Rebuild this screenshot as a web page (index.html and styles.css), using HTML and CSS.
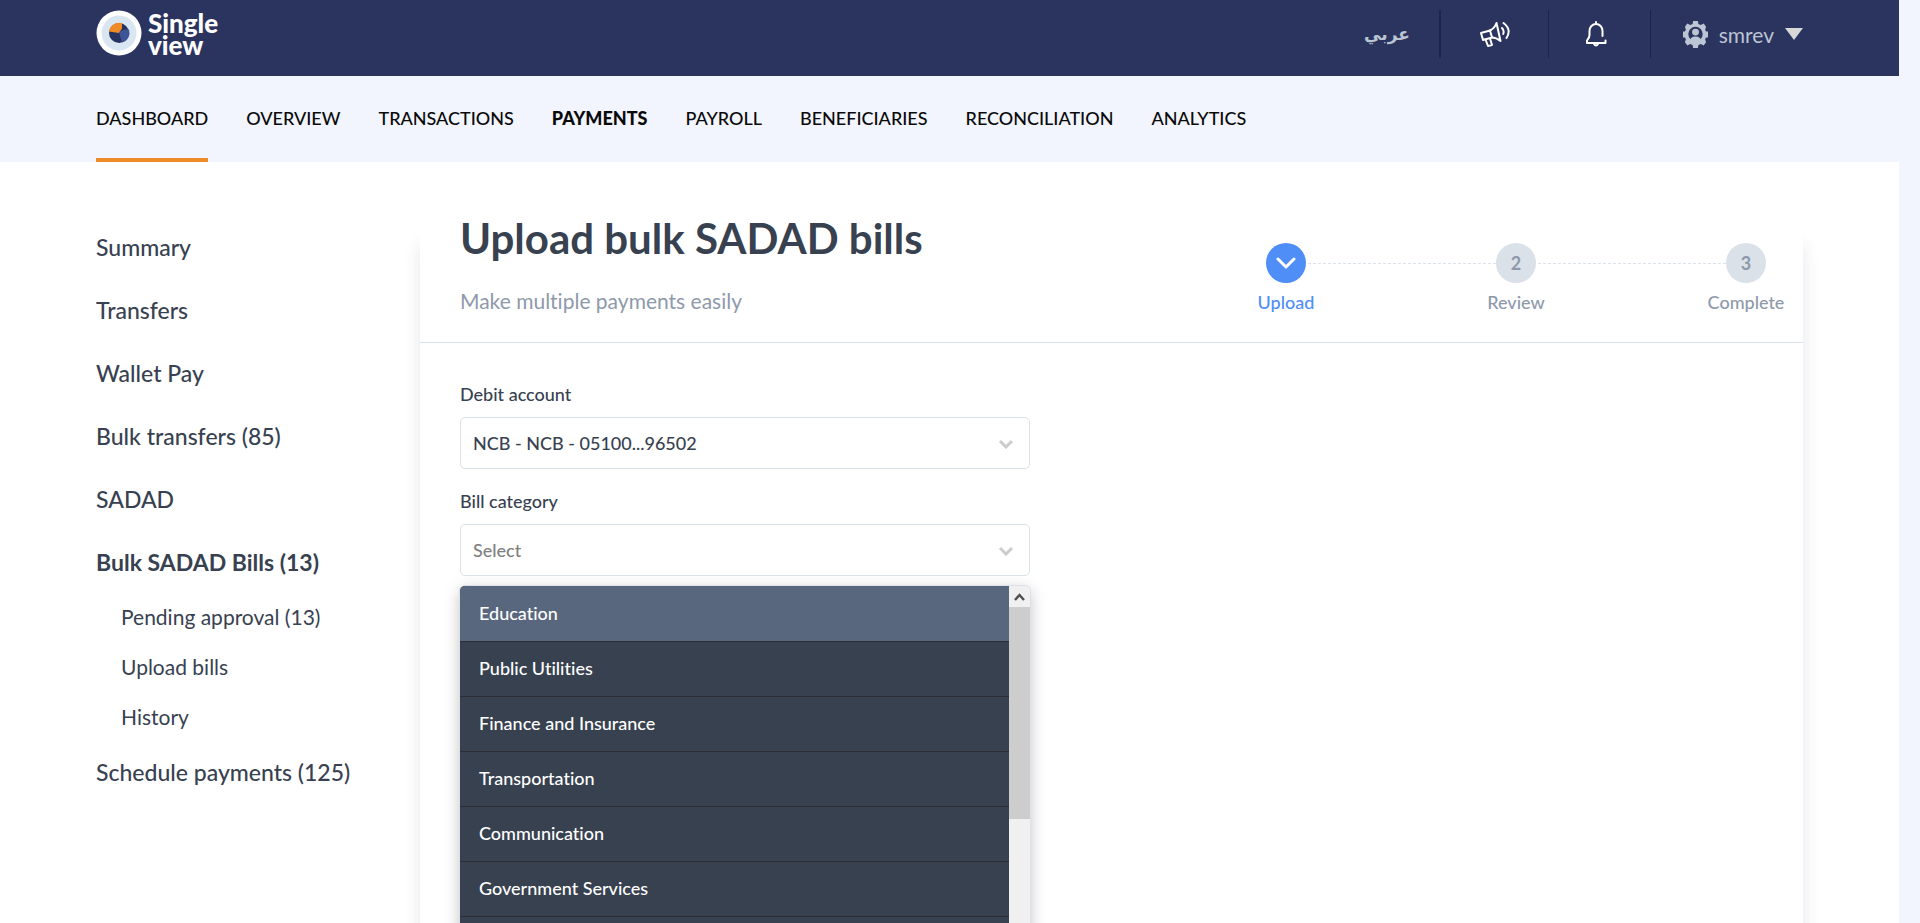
FILE: index.html
```html
<!DOCTYPE html>
<html lang="en">
<head>
<meta charset="utf-8">
<title>Upload bulk SADAD bills</title>
<link rel="stylesheet" href="styles.css">
</head>
<body>
<div class="page">
  <header class="topbar">
    <a class="brand" href="#" aria-label="Single view">
      <svg class="brand-mark" viewBox="0 0 46 46" width="46" height="46" aria-hidden="true">
        <circle cx="23" cy="23" r="22.5" fill="#fff"/>
        <circle cx="23" cy="23" r="17.5" fill="#d9e6f2"/>
        <circle cx="23" cy="23" r="10" fill="#27325f"/>
        <path d="M23 23 13 21.500A10.200 10.200 0 0 1 26 13.200L26 18.500Z" fill="#f08a26"/>
        <path d="M23 22 28.500 19.500H33A10.200 10.200 0 0 1 26 32.600Z" fill="#3c5596"/>
      </svg>
      <span class="brand-name">Single<br>view</span>
    </a>
    <div class="tools">
      <a class="tool language" href="#" lang="ar">عربي</a>
      <button class="tool announce" type="button" aria-label="Announcements">
        <svg viewBox="0 0 32 28" width="32" height="28" fill="none" stroke="#fff" stroke-width="2" stroke-linejoin="round" stroke-linecap="round" aria-hidden="true">
          <path d="M2 13 11 10.500 13 17.500 4 20Z"/><path d="M11 10.500C14 9 16.500 6 17.500 3L21.500 21C19 19 16.500 17.500 13 17.500"/><path d="M6.500 19.500 9 26 13 25 11 18.500"/><path d="M23 8Q25.500 10.500 24.200 14M24.500 3Q33 9.500 27.500 18"/>
        </svg>
      </button>
      <button class="tool alerts" type="button" aria-label="Notifications">
        <svg viewBox="0 0 22 26" width="22" height="26" fill="none" stroke="#fff" stroke-width="2" stroke-linejoin="round" stroke-linecap="round" aria-hidden="true">
          <path d="M17.500 15V10A6.500 7 0 0 0 11 3 6.500 7 0 0 0 4.500 10V14Q4.500 17 2 19.500V22H20.500V19.500"/><path d="M11 1V3M9 23Q11 26 13 23"/>
        </svg>
      </button>
      <button class="tool account" type="button">
        <svg viewBox="0 0 26 28" width="25" height="27" aria-hidden="true">
          <path d="M10.500 0H15.500L16 3 18.500 4 21.500 2.500 24 6 23 9 24 11H26V17H24L23 19 24 22 21.500 25.500 18.500 24 16 25 15.500 28H10.500L10 25 7.500 24 4.500 25.500 2 22 3 19 2 17H0V11H2L3 9 2 6 4.500 2.500 7.500 4 10 3Z" fill="#bcc5d3"/>
          <circle cx="13" cy="13.500" r="7.500" fill="#2b345f"/>
          <circle cx="13" cy="11.500" r="3.600" fill="#bcc5d3"/>
          <path d="M7 22Q7 16 13 16T19 22Z" fill="#bcc5d3"/>
        </svg>
        <span>smrev</span>
        <svg viewBox="0 0 18 12" width="18" height="12" aria-hidden="true"><path d="M0 0H18L9 12Z" fill="#d8d8d8"/></svg>
      </button>
    </div>
  </header>

  <nav class="mainnav" aria-label="Main">
    <a class="mainnav-link is-active" href="#">DASHBOARD</a>
    <a class="mainnav-link" href="#">OVERVIEW</a>
    <a class="mainnav-link" href="#">TRANSACTIONS</a>
    <a class="mainnav-link is-current" href="#">PAYMENTS</a>
    <a class="mainnav-link" href="#">PAYROLL</a>
    <a class="mainnav-link" href="#">BENEFICIARIES</a>
    <a class="mainnav-link" href="#">RECONCILIATION</a>
    <a class="mainnav-link" href="#">ANALYTICS</a>
  </nav>

  <div class="content">
    <nav class="sidenav" aria-label="Payments">
      <a class="sidenav-link" href="#">Summary</a>
      <a class="sidenav-link" href="#">Transfers</a>
      <a class="sidenav-link" href="#">Wallet Pay</a>
      <a class="sidenav-link" href="#">Bulk transfers (85)</a>
      <a class="sidenav-link" href="#">SADAD</a>
      <a class="sidenav-link is-current" href="#">Bulk SADAD Bills (13)</a>
      <div class="subnav">
        <a class="subnav-link" href="#">Pending approval (13)</a>
        <a class="subnav-link" href="#">Upload bills</a>
        <a class="subnav-link" href="#">History</a>
      </div>
      <a class="sidenav-link" href="#">Schedule payments (125)</a>
    </nav>

    <main class="card">
      <div class="card-head">
        <div>
          <h1 class="title">Upload bulk SADAD bills</h1>
          <p class="subtitle">Make multiple payments easily</p>
        </div>
        <ol class="steps">
          <li class="step is-done">
            <span class="step-dot"><svg viewBox="0 0 20 12" width="20" height="12" fill="none" stroke="#fff" stroke-width="3" stroke-linecap="round" stroke-linejoin="round" aria-hidden="true"><path d="M2 2 10 10 18 2"/></svg></span>
            <span>Upload</span>
          </li>
          <li class="step"><span class="step-dot">2</span><span>Review</span></li>
          <li class="step"><span class="step-dot">3</span><span>Complete</span></li>
        </ol>
      </div>
      <form class="form">
        <div class="field">
          <label class="label" for="debit">Debit account</label>
          <div class="control">
            <select class="select" id="debit"><option>NCB - NCB - 05100...96502</option></select>
            <svg class="chevron" viewBox="0 0 16 10" width="16" height="10" aria-hidden="true"><path d="M2 2 8 8 14 2"/></svg>
          </div>
        </div>
        <div class="field">
          <label class="label" for="category">Bill category</label>
          <div class="control">
            <select class="select is-empty" id="category"><option>Select</option></select>
            <svg class="chevron" viewBox="0 0 16 10" width="16" height="10" aria-hidden="true"><path d="M2 2 8 8 14 2"/></svg>
            <div class="menu">
              <ul class="options" role="listbox" aria-label="Bill category">
                <li class="option is-hover" role="option">Education</li>
                <li class="option" role="option">Public Utilities</li>
                <li class="option" role="option">Finance and Insurance</li>
                <li class="option" role="option">Transportation</li>
                <li class="option" role="option">Communication</li>
                <li class="option" role="option">Government Services</li>
                <li class="option" role="option"></li>
              </ul>
              <div class="scroll" aria-hidden="true">
                <svg class="scroll-up" viewBox="0 0 21 21" width="21" height="21"><path d="M6 14 10.500 9 15 14" fill="none" stroke="#505050" stroke-width="2.500"/></svg>
                <div class="scroll-thumb"></div>
              </div>
            </div>
          </div>
        </div>
      </form>
    </main>
  </div>
</div>
</body>
</html>
```
FILE: styles.css
```css
* { box-sizing: border-box; }
html { background: #f2f5fe; }
body {
  margin: 0;
  padding-right: 21px;
  height: 100vh;
  overflow: hidden;
  font-family: Lato, "Noto Sans", sans-serif;
  font-size: 18px;
  font-variant-ligatures: none;
  color: #384150;
}
a { color: inherit; text-decoration: none; }
button { border: 0; background: none; font: inherit; color: inherit; }
.page {
  display: flex;
  flex-direction: column;
  height: 100%;
  background: #fff;
}

.topbar {
  display: flex;
  justify-content: space-between;
  flex-shrink: 0;
  height: 76px;
  padding: 10px 96px 18px;
  background: #2b345f;
  color: #bcc5d3;
}
.brand { display: flex; gap: 6px; color: #fff; }
.brand-name {
  padding-top: 2px;
  font-size: 26px;
  font-weight: 900;
  line-height: 22px;
}
.tools { display: flex; align-items: center; }
.tool {
  display: flex;
  align-items: center;
  justify-content: center;
  height: 48px;
  padding: 0;
  border-right: 1px solid #1b2450;
}
.language {
  width: 106px;
  border-right-width: 2px;
  font-family: "DejaVu Sans", sans-serif;
  font-size: 17px;
  font-weight: 700;
}
.announce { width: 108px; }
.alerts { width: 102px; padding-right: 8px; }
.account { justify-content: flex-end; gap: 11px; width: 152px; border: 0; font-size: 21px; }

.mainnav {
  display: flex;
  gap: 38px;
  flex-shrink: 0;
  height: 86px;
  padding-left: 96px;
  background: #f2f5fe;
  color: #0a0a0a;
  font-weight: 500;
}
.mainnav-link { line-height: 85px; }
.mainnav-link.is-active { box-shadow: inset 0 -4px #ef8a29; }
.mainnav-link.is-current { font-weight: 900; }

.content {
  display: grid;
  grid-template-columns: 324px 1fr;
  flex: 1;
  min-height: 0;
  padding: 48px 96px 0;
}
.sidenav { padding-top: 6px; font-size: 23px; font-weight: 500; }
.sidenav-link { display: block; line-height: 63px; }
.sidenav-link.is-current { font-weight: 700; }
.subnav { margin: -2px 0 -1px; padding-left: 25px; font-size: 21px; font-weight: 400; }
.subnav-link { display: block; line-height: 50px; }

.card {
  background: #fff;
  box-shadow: 0 36px 16px rgba(40, 50, 80, 0.12);
}
.card-head {
  display: flex;
  justify-content: space-between;
  height: 133px;
  padding-left: 40px;
  border-bottom: 1px solid #dae1e9;
}
.title { margin: 0; font-size: 42px; line-height: 56px; }
.subtitle { margin: 20px 0 0; font-size: 21px; line-height: 30px; color: #8e99ab; }
.steps {
  display: grid;
  grid-template-columns: repeat(3, 230px);
  margin: 0 -58px 0 0;
  padding: 33px 0 0;
  list-style: none;
  color: #8e99ab;
  font-weight: 500;
}
.step {
  position: relative;
  display: flex;
  flex-direction: column;
  align-items: center;
  gap: 7px;
  line-height: 24px;
}
.step + .step::before {
  content: "";
  position: absolute;
  top: 20px;
  right: calc(50% + 20px);
  width: calc(100% - 42px);
  border-top: 1px dashed #dae1e9;
}
.step-dot {
  display: flex;
  align-items: center;
  justify-content: center;
  width: 40px;
  height: 40px;
  border-radius: 50%;
  background: #dae1e9;
  font-weight: 700;
}
.step.is-done { color: #4f8ef7; }
.step.is-done .step-dot { background: #4f8ef7; }

.form { width: 610px; padding: 39px 0 0 40px; font-weight: 500; }
.field { margin-bottom: 20px; }
.label { display: block; line-height: 24px; margin-bottom: 11px; }
.control { position: relative; }
.select {
  display: block;
  width: 100%;
  height: 52px;
  padding: 0 12px;
  border: 1px solid #dae1e9;
  border-radius: 5px;
  background: #fff;
  appearance: none;
  font: inherit;
  color: inherit;
}
.select.is-empty { color: #808080; }
.chevron {
  position: absolute;
  top: 22px;
  right: 16px;
  fill: none;
  stroke: #ccc;
  stroke-width: 3;
}
.menu {
  position: absolute;
  top: 62px;
  left: 0;
  right: 0;
  display: flex;
  border-radius: 5px 5px 0 0;
  overflow: hidden;
  box-shadow: 0 0 0 1px #dae1e9, 0 4px 16px rgba(0, 0, 0, 0.25);
}
.options {
  flex: 1;
  margin: 0;
  padding: 0;
  border-top: 1px solid #58677d;
  list-style: none;
  background: #384150;
  color: #fff;
}
.option { height: 55px; padding: 0 19px; border-bottom: 1px solid #2c2e33; line-height: 53px; }
.option.is-hover { background: #58677d; }
.scroll { width: 21px; background: #f0f0f0; }
.scroll-up { display: block; }
.scroll-thumb { height: 212px; background: #cdcdcd; }
```
